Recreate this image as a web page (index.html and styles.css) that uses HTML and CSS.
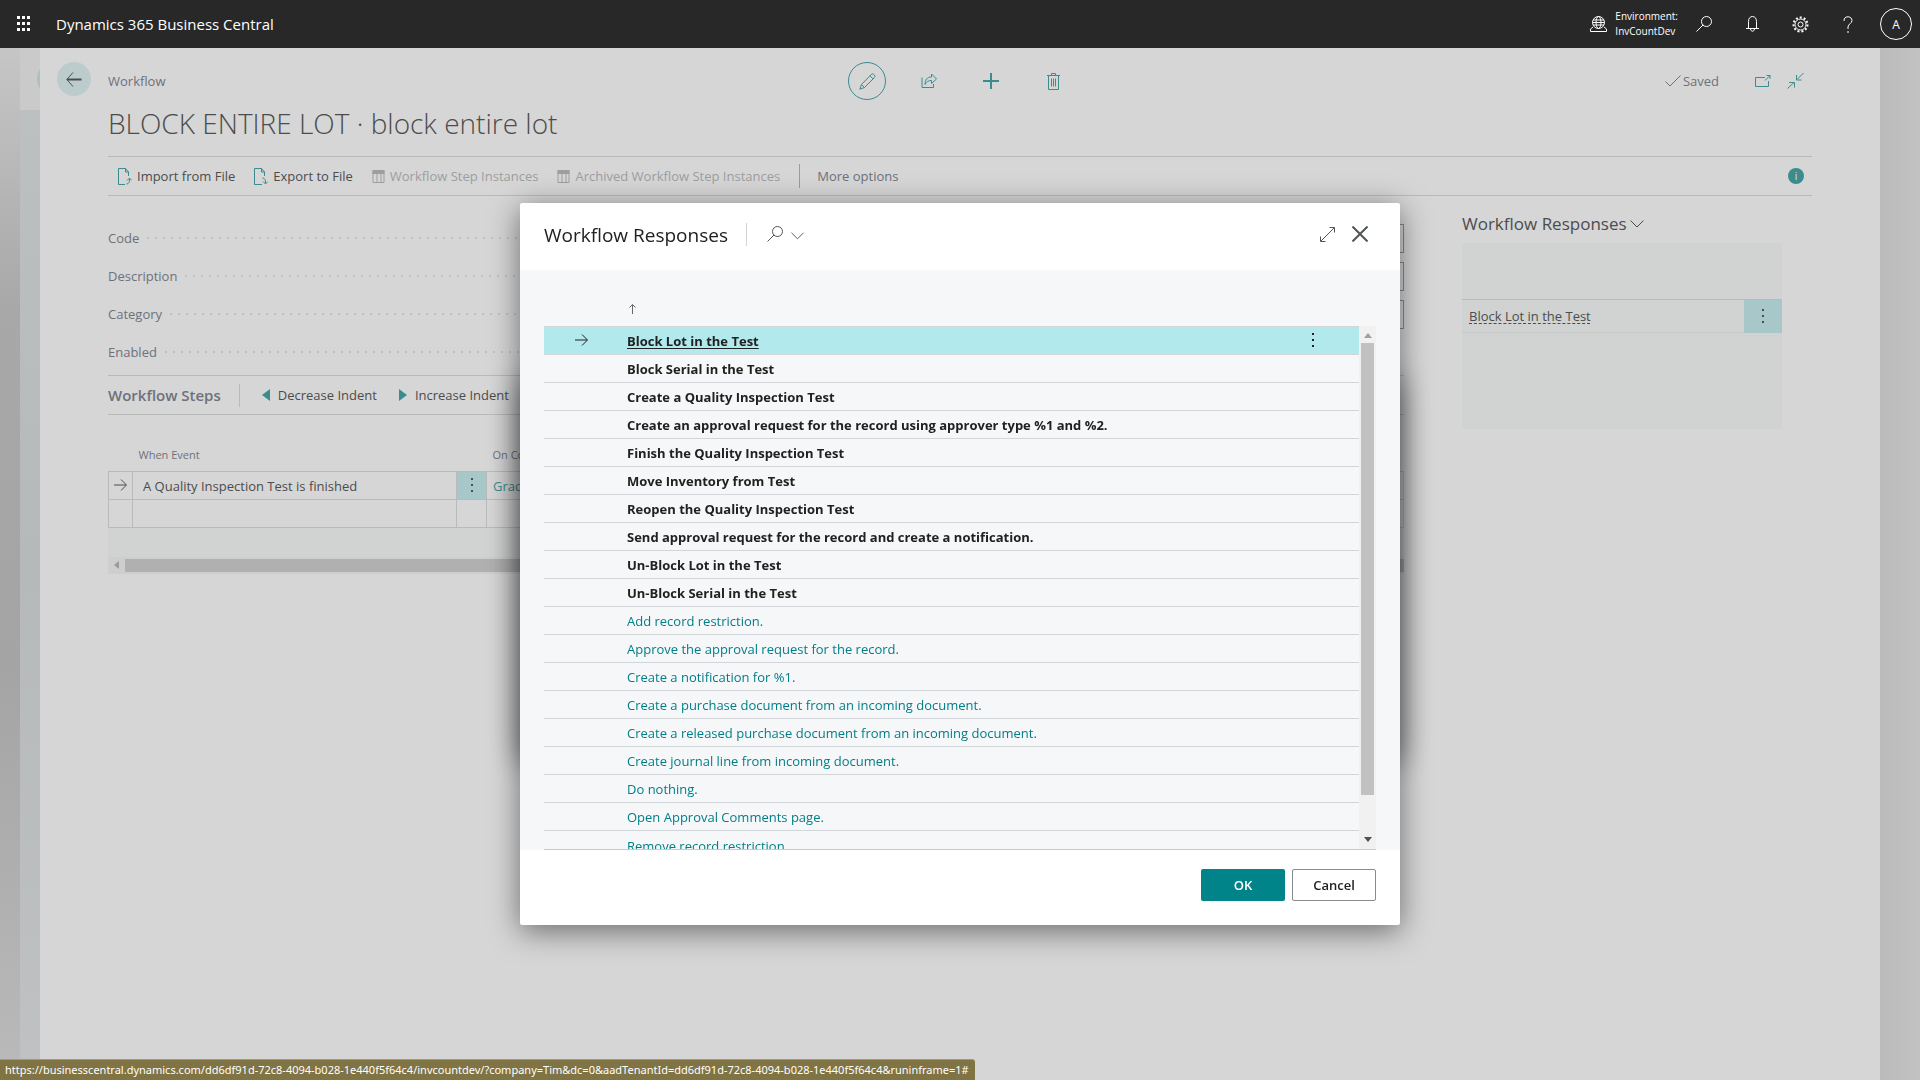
FILE: index.html
```html
<!DOCTYPE html>
<html lang="en">
<head>
    <meta charset="UTF-8">
    <meta name="viewport" content="width=device-width, initial-scale=1.0">
    <title>Workflow - Dynamics 365 Business Central</title>
    <link rel="stylesheet" href="styles.css">
</head>
<body>
    <!-- Shared icons -->
    <svg class="sprite" aria-hidden="true">
        <symbol id="i-search" viewBox="0 0 16 16"><circle cx="10.500" cy="5.500" r="5"/><path d="M7 9L.5 15.500"/></symbol>
        <symbol id="i-chevron" viewBox="0 0 14 8"><path d="M.5.5L7 7l6.500-6.500"/></symbol>
        <symbol id="i-arrow" viewBox="0 0 13 12"><path d="M0 6h12M7 .5L12.500 6L7 11.500"/></symbol>
        <symbol id="i-dots" viewBox="0 0 2 14"><path class="fill" d="M0 0h2v2H0zM0 6h2v2H0zM0 12h2v2H0z"/></symbol>
        <symbol id="i-columns" viewBox="0 0 12 13"><path d="M.5.5h11v12H.5zM4.500 3v9M8.500 3v9"/><path class="fill" d="M0 0h12v4H0z"/></symbol>
    </svg>

    <header class="topbar">
        <button class="launcher" aria-label="App launcher">
            <svg width="14" height="16" viewBox="0 0 14 16"><path class="fill" d="M0 0h3v3H0zM5 0h3v3H5zM10 0h3v3h-3zM0 6h3v3H0zM5 6h3v3H5zM10 6h3v3h-3zM0 12h3v3H0zM5 12h3v3H5zM10 12h3v3h-3z"/></svg>
        </button>
        <a class="product" href="#">Dynamics 365 Business Central</a>
        <div class="environment">
            <svg width="17" height="16" viewBox="0 0 17 16"><circle cx="8.500" cy="6.500" r="6"/><ellipse cx="8.500" cy="6.500" rx="2.500" ry="6"/><path d="M3 4h11M2.500 6.500h12M3 9h11M3 11L.5 13v2.500h16V13L14 11"/></svg>
            <span>Environment:<br>InvCountDev</span>
        </div>
        <button class="top-btn" aria-label="Search"><svg width="16" height="16"><use href="#i-search"/></svg></button>
        <button class="top-btn" aria-label="Notifications">
            <svg width="13" height="16" viewBox="0 0 13 16"><path d="M2.500 12.500V5.500C2.500 2.500 4 .5 6.500.5s4 2 4 5v7M0 12.500h13M4.500 13c.5 3 3.500 3 4 0"/></svg>
        </button>
        <button class="top-btn" aria-label="Settings">
            <svg width="17" height="17" viewBox="0 0 17 17"><circle cx="8.500" cy="8.500" r="2.500"/><circle cx="8.500" cy="8.500" r="5.500"/><circle class="teeth" cx="8.500" cy="8.500" r="7"/></svg>
        </button>
        <button class="top-btn" aria-label="Help">
            <svg width="10" height="17" viewBox="0 0 10 17"><path d="M1 5C1 2 2.500.8 5 .8S9 2.500 9 4.500C9 7.500 5 8 5 11v2M5 15v2"/></svg>
        </button>
        <button class="top-btn" aria-label="Account"><span class="avatar">A</span></button>
    </header>

    <div class="workspace">
        <div class="edge edge-left"></div>
        <div class="back-sheet"><span class="back-sheet-circle"></span></div>

        <main class="sheet">
            <div class="gutter">
                <button class="back" aria-label="Back">
                    <svg width="16" height="15" viewBox="0 0 16 15"><path d="M7 .5L.8 7.500L7 14.500"/><path class="thick" d="M1 7.500h14.500"/></svg>
                </button>
            </div>

            <div class="content">
                <div class="page-head">
                    <a class="crumb" href="#">Workflow</a>
                    <div class="page-actions">
                        <button class="circle" aria-label="Edit">
                            <svg width="17" height="17" viewBox="0 0 17 17"><path d="M.8 16.200L2.500 11.500L12.500 1.200C14 0 17 2.500 15.500 4.500L5.500 14.500zM2.500 11.500l3 3M11 2.800l3.200 3.200"/></svg>
                        </button>
                        <button aria-label="Share">
                            <svg width="17" height="16" viewBox="0 0 17 16"><path d="M1 4.500v10h11.500V11M4 11.500C4 7 6 4 10.500 4V1L15.500 6l-5 4.500V7.500C7.500 7.500 5.500 8.500 4 11.500z"/></svg>
                        </button>
                        <button aria-label="New">
                            <svg width="16" height="16" viewBox="0 0 16 16"><path class="thick" d="M8 0v16M0 8h16"/></svg>
                        </button>
                        <button aria-label="Delete">
                            <svg width="13" height="17" viewBox="0 0 13 17"><path d="M1.500 3v13.500h10V3M0 2.500h13M4.500 2.500v-2h4v2M4.500 5.500v8M6.500 5.500v8M8.500 5.500v8"/></svg>
                        </button>
                    </div>
                    <div class="page-status">
                        <svg width="16" height="12" viewBox="0 0 16 12"><path d="M.5 6.500L5 11L15.500.5"/></svg>
                        <span>Saved</span>
                        <button class="popout" aria-label="Open in new window">
                            <svg width="16" height="12" viewBox="0 0 16 12"><path d="M10 2.500H.5v9h13V6M10 5.500l5-5M11.500.5H15V4"/></svg>
                        </button>
                        <button class="collapse" aria-label="Collapse">
                            <svg width="17" height="16" viewBox="0 0 17 16"><path d="M16.500 0L10 6.500M9.500 2v5h5M.5 15.500L7 9.500M2 9.500h5.500v5"/></svg>
                        </button>
                    </div>
                </div>

                <h1>BLOCK ENTIRE LOT · block entire lot</h1>

                <nav class="toolbar">
                    <button>
                        <svg class="teal" width="14" height="17" viewBox="0 0 14 17"><path d="M7 16.500H.5V.5H7.500L10.500 4v4M7.500.5V4H10.500M8.500 16c2.500 0 3-2 3-5M9 12.500l2.500-2.500l2.500 2.500"/></svg>
                        Import from File
                    </button>
                    <button>
                        <svg class="teal" width="14" height="17" viewBox="0 0 14 17"><path d="M8 16.500H.5V.5H7.500L10.500 4v4M7.500.5V4H10.500M8.500 10c2.500 0 3 2 3 5M9 13.500l2.500 2.500l2.500-2.500"/></svg>
                        Export to File
                    </button>
                    <button disabled><svg width="13" height="13"><use href="#i-columns"/></svg>Workflow Step Instances</button>
                    <button disabled><svg width="13" height="13"><use href="#i-columns"/></svg>Archived Workflow Step Instances</button>
                    <button class="more">More options</button>
                    <button class="info" aria-label="Show details">i</button>
                </nav>

                <div class="columns">
                    <div class="details">
                        <form class="fields">
                            <div class="field"><label for="code">Code</label><input id="code" type="text"></div>
                            <div class="field"><label for="description">Description</label><input id="description" type="text"></div>
                            <div class="field"><label for="category">Category</label><input id="category" type="text"></div>
                            <div class="field"><label for="enabled">Enabled</label><input id="enabled" type="checkbox"></div>
                        </form>

                        <div class="steps-bar">
                            <h2>Workflow Steps</h2>
                            <button><svg class="teal" width="8" height="12" viewBox="0 0 8 12"><path class="fill" d="M8 0v12L0 6z"/></svg>Decrease Indent</button>
                            <button><svg class="teal" width="8" height="12" viewBox="0 0 8 12"><path class="fill" d="M0 0v12l8-6z"/></svg>Increase Indent</button>
                        </div>

                        <table class="steps">
                            <thead>
                                <tr><th class="col-mark"></th><th class="col-event">When Event</th><th class="col-menu"></th><th>On Condition</th></tr>
                            </thead>
                            <tbody>
                                <tr>
                                    <td class="mark"><svg width="13" height="12"><use href="#i-arrow"/></svg></td>
                                    <td>A Quality Inspection Test is finished</td>
                                    <td class="menu"><button aria-label="More"><svg width="2" height="14"><use href="#i-dots"/></svg></button></td>
                                    <td class="condition"><a href="#">Grade</a></td>
                                </tr>
                                <tr><td></td><td></td><td></td><td></td></tr>
                            </tbody>
                        </table>
                        <div class="steps-rest"></div>
                        <div class="hscroll">
                            <svg width="5" height="8" viewBox="0 0 5 8"><path class="fill" d="M5 0v8L0 4z"/></svg>
                            <span></span>
                        </div>
                    </div>

                    <aside class="factbox">
                        <h2>Workflow Responses <svg width="14" height="8"><use href="#i-chevron"/></svg></h2>
                        <div class="factbox-list">
                            <div class="factbox-row">
                                <a href="#">Block Lot in the Test</a>
                                <button aria-label="More"><svg width="2" height="14"><use href="#i-dots"/></svg></button>
                            </div>
                        </div>
                    </aside>
                </div>
            </div>
        </main>

        <div class="edge edge-right"></div>
    </div>

    <!-- Lookup dialog -->
    <div class="overlay">
        <div class="dialog-behind"></div>
        <section class="dialog" role="dialog" aria-labelledby="dialog-title">
            <div class="dialog-head">
                <h2 id="dialog-title">Workflow Responses</h2>
                <button class="dialog-search" aria-label="Search">
                    <svg width="16" height="16"><use href="#i-search"/></svg>
                    <svg class="chevron" width="13" height="8"><use href="#i-chevron"/></svg>
                </button>
                <button class="expand" aria-label="Expand">
                    <svg width="15" height="15" viewBox="0 0 15 15"><path d="M1 14L14 1M9.500.5h5v5M.5 9.500v5h5"/></svg>
                </button>
                <button class="close" aria-label="Close">
                    <svg width="16" height="16" viewBox="0 0 16 16"><path class="thick" d="M.5.5l15 15M15.500.5l-15 15"/></svg>
                </button>
            </div>

            <div class="dialog-body">
                <div class="sort">
                    <svg width="7" height="10" viewBox="0 0 7 10"><path d="M3.500 10V.8M.5 3.500L3.500.5l3 3"/></svg>
                </div>
                <div class="list">
                    <div class="list-view">
                        <table class="responses">
                            <tbody>
                                <tr class="selected">
                                    <td class="mark"><svg width="13" height="12"><use href="#i-arrow"/></svg></td>
                                    <td><a href="#">Block Lot in the Test</a></td>
                                    <td class="menu"><button aria-label="More"><svg width="2" height="14"><use href="#i-dots"/></svg></button></td>
                                </tr>
                                <tr class="strong"><td></td><td><a href="#">Block Serial in the Test</a></td><td></td></tr>
                                <tr class="strong"><td></td><td><a href="#">Create a Quality Inspection Test</a></td><td></td></tr>
                                <tr class="strong"><td></td><td><a href="#">Create an approval request for the record using approver type %1 and %2.</a></td><td></td></tr>
                                <tr class="strong"><td></td><td><a href="#">Finish the Quality Inspection Test</a></td><td></td></tr>
                                <tr class="strong"><td></td><td><a href="#">Move Inventory from Test</a></td><td></td></tr>
                                <tr class="strong"><td></td><td><a href="#">Reopen the Quality Inspection Test</a></td><td></td></tr>
                                <tr class="strong"><td></td><td><a href="#">Send approval request for the record and create a notification.</a></td><td></td></tr>
                                <tr class="strong"><td></td><td><a href="#">Un-Block Lot in the Test</a></td><td></td></tr>
                                <tr class="strong"><td></td><td><a href="#">Un-Block Serial in the Test</a></td><td></td></tr>
                                <tr><td></td><td><a href="#">Add record restriction.</a></td><td></td></tr>
                                <tr><td></td><td><a href="#">Approve the approval request for the record.</a></td><td></td></tr>
                                <tr><td></td><td><a href="#">Create a notification for %1.</a></td><td></td></tr>
                                <tr><td></td><td><a href="#">Create a purchase document from an incoming document.</a></td><td></td></tr>
                                <tr><td></td><td><a href="#">Create a released purchase document from an incoming document.</a></td><td></td></tr>
                                <tr><td></td><td><a href="#">Create journal line from incoming document.</a></td><td></td></tr>
                                <tr><td></td><td><a href="#">Do nothing.</a></td><td></td></tr>
                                <tr><td></td><td><a href="#">Open Approval Comments page.</a></td><td></td></tr>
                                <tr><td></td><td><a href="#">Remove record restriction.</a></td><td></td></tr>
                            </tbody>
                        </table>
                    </div>
                    <div class="vscroll">
                        <svg class="up" width="8" height="5" viewBox="0 0 8 5"><path class="fill" d="M0 5h8L4 0z"/></svg>
                        <span></span>
                        <svg class="down" width="8" height="5" viewBox="0 0 8 5"><path class="fill" d="M0 0h8L4 5z"/></svg>
                    </div>
                </div>
            </div>

            <div class="dialog-foot">
                <button class="ok">OK</button>
                <button class="cancel">Cancel</button>
            </div>
        </section>
    </div>

    <div class="status-url">https://businesscentral.dynamics.com/dd6df91d-72c8-4094-b028-1e440f5f64c4/invcountdev/?company=Tim&amp;dc=0&amp;aadTenantId=dd6df91d-72c8-4094-b028-1e440f5f64c4&amp;runinframe=1#</div>
</body>
</html>
```
FILE: styles.css
```css
:root {
    --teal: #3a8c8e;
    --text: #4c4c4c;
    --muted: #6d717b;
    --line: #b9bbbb;
    --sheet: #d6d6d6;
    --panel: #d0d3d1;
    --cell: #a7c7c9;
}

* {
    box-sizing: border-box;
    margin: 0;
    padding: 0;
}

body {
    font-family: "Open Sans", "Noto Sans", sans-serif;
    font-size: 13px;
    line-height: 20px;
    color: var(--text);
    background: #c0c0c0;
    height: 100vh;
    overflow: hidden;
    display: flex;
    flex-direction: column;
}

button {
    font: inherit;
    color: inherit;
    background: none;
    border: none;
    cursor: pointer;
    display: flex;
    align-items: center;
    justify-content: center;
}

a {
    color: inherit;
    text-decoration: none;
}

svg {
    display: block;
    flex: none;
    fill: none;
    stroke: currentColor;
    stroke-width: 1;
}

.sprite {
    position: absolute;
    width: 0;
    height: 0;
}

.fill {
    fill: currentColor;
    stroke: none;
}

.thick {
    stroke-width: 2;
}

.teal {
    color: var(--teal);
}

/* Top bar */
.topbar {
    height: 48px;
    flex: none;
    background: #282828;
    color: #fff;
    display: flex;
    align-items: center;
}

.launcher {
    width: 48px;
    height: 48px;
}

.product {
    margin-left: 8px;
    margin-right: auto;
    font-size: 15px;
    font-weight: 500;
}

.environment {
    display: flex;
    align-items: center;
    gap: 8px;
    margin-right: 2px;
    font-size: 10px;
    line-height: 15px;
}

.top-btn {
    width: 48px;
    height: 48px;
}

.teeth {
    stroke-width: 2;
    stroke-dasharray: 2 2;
}

.avatar {
    width: 32px;
    height: 32px;
    border: 1px solid #fff;
    border-radius: 50%;
    font-size: 12px;
    line-height: 32px;
}

/* Page stack */
.workspace {
    flex: 1;
    display: flex;
    min-height: 0;
}

.edge-left {
    width: 20px;
    background: linear-gradient(#c6c6c6, #a8a8a8 25%, #a4a4a4 60%, #bababa);
}

.edge-right {
    width: 40px;
    background: linear-gradient(to right, #bbbbbb, #c2c2c2);
}

.back-sheet {
    width: 20px;
    padding-top: 14px;
    overflow: hidden;
    background: linear-gradient(#cacaca 62px, #bdc0c1 62px, #b6b9b9 50%, #bfc1c2);
}

.back-sheet-circle {
    display: block;
    width: 34px;
    height: 34px;
    margin-left: 17px;
    border-radius: 50%;
    background: #adbfc0;
}

.sheet {
    flex: 1;
    display: flex;
    padding: 14px 68px 0 0;
    background: var(--sheet);
}

.gutter {
    width: 68px;
    padding-left: 17px;
}

.back {
    width: 34px;
    height: 34px;
    border-radius: 50%;
    background: #bccccc;
}

.content {
    flex: 1;
    min-width: 0;
}

.page-head {
    height: 38px;
    display: grid;
    grid-template-columns: 1fr auto 1fr;
    align-items: center;
}

.crumb {
    color: var(--muted);
}

.page-actions {
    display: flex;
    gap: 24px;
    color: var(--teal);
}

.page-actions button {
    width: 38px;
    height: 38px;
}

.page-actions .circle {
    border: 1px solid var(--teal);
    border-radius: 50%;
}

.page-status {
    display: flex;
    align-items: center;
    justify-content: flex-end;
    gap: 2px;
    padding-right: 8px;
    color: var(--muted);
}

.page-status button {
    color: var(--teal);
}

.popout {
    margin-left: 34px;
}

.collapse {
    margin-left: 14px;
}

h1 {
    height: 56px;
    font-size: 28px;
    font-weight: 300;
    line-height: 46px;
}

.toolbar {
    height: 40px;
    border-top: 1px solid var(--line);
    border-bottom: 1px solid var(--line);
    padding: 0 8px 0 10px;
    display: flex;
    align-items: center;
    gap: 19px;
}

.toolbar button {
    gap: 5px;
}

.toolbar button:disabled {
    color: #9c9ea2;
    cursor: default;
}

.toolbar .more {
    height: 24px;
    padding-left: 17px;
    border-left: 1px solid #9a9ca3;
    color: var(--muted);
}

.toolbar .info {
    width: 16px;
    height: 16px;
    margin-left: auto;
    border-radius: 50%;
    background: var(--teal);
    color: #e4e4e4;
    font-size: 10px;
    line-height: 16px;
}

.columns {
    display: grid;
    grid-template-columns: 1fr 350px;
    gap: 58px;
}

/* General fields */
.fields {
    padding: 23px 0 4px;
}

.field {
    height: 38px;
    display: grid;
    grid-template-columns: 1fr 1fr;
    align-items: center;
    color: var(--muted);
}

.field label {
    display: flex;
    align-items: center;
    gap: 8px;
}

.field label::after {
    content: "";
    flex: 1;
    height: 2px;
    background: repeating-linear-gradient(to right, #bfc0c1 0 2px, transparent 2px 8px);
}

.field input[type="text"] {
    height: 29px;
    border: 1px solid #85888e;
    background: transparent;
}

.field input[type="checkbox"] {
    width: 16px;
    height: 16px;
}

/* Workflow steps */
.steps-bar {
    height: 40px;
    border-top: 1px solid var(--line);
    border-bottom: 1px solid var(--line);
    display: flex;
    align-items: center;
    gap: 22px;
}

.steps-bar h2 {
    height: 23px;
    padding-right: 18px;
    border-right: 1px solid var(--line);
    font-size: 15px;
    font-weight: 600;
    line-height: 23px;
    color: var(--muted);
}

.steps-bar button {
    gap: 8px;
}

.steps {
    width: 100%;
    table-layout: fixed;
    border-collapse: collapse;
}

.steps th {
    height: 56px;
    padding: 24px 0 0 6px;
    font-size: 11px;
    font-weight: 400;
    text-align: left;
    color: var(--muted);
}

.col-mark {
    width: 24px;
}

.col-event {
    width: 324px;
}

.col-menu {
    width: 30px;
}

.steps td {
    height: 28px;
    padding: 2px 10px 0;
    border: 1px solid var(--line);
}

.steps .mark {
    padding: 0 5px;
}

.steps .menu {
    padding: 0;
    background: var(--cell);
}

.steps .condition {
    padding: 2px 6px 0;
    color: var(--teal);
}

.menu button {
    width: 100%;
    height: 27px;
}

.steps-rest {
    height: 29px;
    background: var(--panel);
}

.hscroll {
    height: 17px;
    padding-left: 6px;
    display: flex;
    align-items: center;
    gap: 6px;
    background: #cecece;
    color: #9a9a9a;
}

.hscroll span {
    flex: 1;
    height: 13px;
    background: #b0b0b0;
}

/* Fact box */
.factbox {
    padding: 16px 30px 0 0;
}

.factbox h2 {
    display: flex;
    align-items: center;
    gap: 3px;
    font-size: 17px;
    font-weight: 500;
    line-height: 24px;
}

.factbox-list {
    height: 186px;
    margin-top: 7px;
    padding-top: 56px;
    background: var(--panel);
}

.factbox-row {
    height: 34px;
    display: flex;
    align-items: center;
    justify-content: space-between;
    padding-left: 7px;
    border-top: 1px solid var(--line);
    border-bottom: 1px solid #c6c8c8;
}

.factbox-row a {
    text-decoration: underline dashed 1px;
    text-underline-offset: 2px;
}

.factbox-row button {
    width: 38px;
    height: 33px;
    background: var(--cell);
}

/* Dialog */
.overlay {
    position: fixed;
    inset: 48px 0 0;
    display: grid;
    place-items: center;
}

.dialog-behind,
.dialog {
    grid-area: 1 / 1;
    width: 90%;
    max-width: 880px;
    border-radius: 2px;
    box-shadow: 0 6px 30px rgba(0, 0, 0, 0.5);
}

.dialog-behind {
    height: 37%;
}

.dialog {
    z-index: 1;
    height: 70%;
    display: flex;
    flex-direction: column;
    background: #fff;
    color: #212121;
}

.dialog-head {
    height: 67px;
    padding: 0 32px 4px 24px;
    display: flex;
    align-items: center;
    color: #505558;
}

.dialog-head h2 {
    font-size: 19px;
    font-weight: 500;
    line-height: 26px;
    padding: 2px 18px 0 0;
    color: #212121;
}

.dialog-search {
    height: 23px;
    padding-left: 20px;
    gap: 8px;
    border-left: 1px solid #d2d4d8;
}

.chevron {
    margin-top: 4px;
}

.expand {
    margin-left: auto;
    margin-right: 17px;
}

.dialog-body {
    flex: 1;
    min-height: 0;
    padding: 0 24px;
    display: flex;
    flex-direction: column;
    background: #f6f7f9;
}

.sort {
    height: 56px;
    padding: 34px 0 0 85px;
    color: #666;
}

.list {
    flex: 1;
    min-height: 0;
    display: flex;
    border-bottom: 1px solid #c8cacc;
}

.list-view {
    flex: 1;
    overflow: hidden;
}

.responses {
    width: 100%;
    table-layout: fixed;
    border-collapse: collapse;
    color: #007e87;
}

.responses td {
    height: 28px;
    padding-top: 2px;
    border-top: 1px solid #d2d5da;
}

.responses td:first-child {
    width: 83px;
}

.responses td:last-child {
    width: 92px;
}

.responses .mark {
    padding: 0 0 0 31px;
}

.responses .menu {
    padding: 0;
}

.responses .strong,
.responses .selected {
    font-weight: 700;
    color: #212121;
}

.responses .selected {
    background: #b1e9ec;
}

.selected a {
    text-decoration: underline;
    text-underline-offset: 2px;
}

.vscroll {
    width: 17px;
    padding: 7px 2px;
    display: flex;
    flex-direction: column;
    align-items: center;
    background: #f1f1f1;
}

.vscroll span {
    width: 13px;
    height: 452px;
    margin: 5px 0 auto;
    background: #c1c1c1;
}

.up {
    color: #a0a0a0;
}

.down {
    color: #505050;
}

.dialog-foot {
    height: 75px;
    padding: 19px 24px 0;
    display: flex;
    justify-content: flex-end;
    gap: 7px;
    font-weight: 600;
}

.dialog-foot button {
    width: 84px;
    height: 32px;
    border-radius: 2px;
}

.ok {
    background: #00848a;
    color: #fff;
}

.cancel {
    border: 1px solid #8a8b8d;
}

/* Link preview */
.status-url {
    position: fixed;
    left: 0;
    bottom: 0;
    height: 21px;
    padding: 0 6px 0 5px;
    border-top: 1px solid #9a9a94;
    border-top-right-radius: 3px;
    background: #807344;
    color: #fff;
    font-family: "Noto Sans", sans-serif;
    font-size: 11px;
}
```
